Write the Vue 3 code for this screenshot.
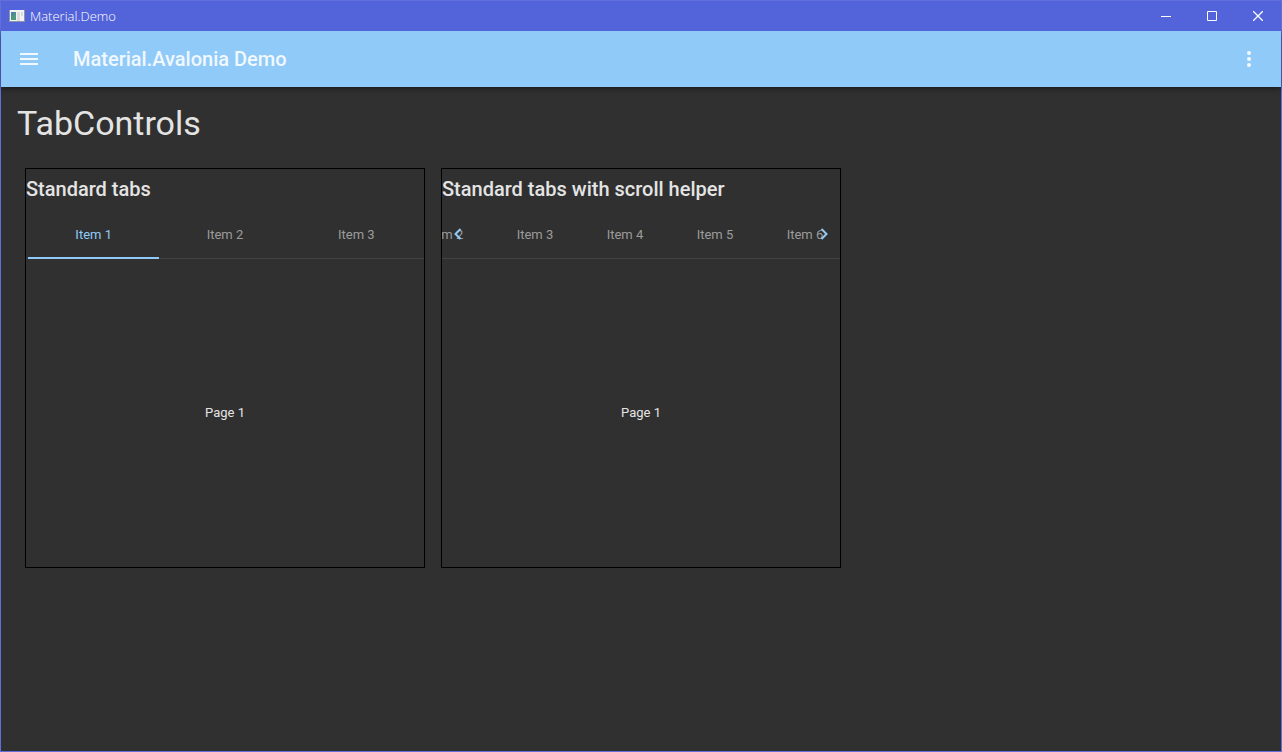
<script setup>
import { ref } from 'vue'

const standardTabs = ['Item 1', 'Item 2', 'Item 3']
const scrollTabs = ['Item 1', 'Item 2', 'Item 3', 'Item 4', 'Item 5', 'Item 6']
const selected = ref(0)
const scrollSelected = ref(0)
const offset = ref(134)

function scrollBy(delta) {
  offset.value = Math.max(0, Math.min(146, offset.value + delta))
}
</script>

<template>
  <div class="window">
    <header class="titlebar">
      <svg class="app-icon" width="16" height="14" viewBox="0 0 16 14" aria-hidden="true">
        <rect x="0" y="1" width="16" height="12" fill="#8f94a8" />
        <rect x="1" y="1" width="14" height="11" fill="#f3f3f3" />
        <rect x="2" y="3" width="5" height="8" fill="#4c9a7c" />
        <path d="M2 3h5L2 9z" fill="#4c86a5" />
        <rect x="8" y="3" width="3" height="9" fill="#dcdcdc" />
        <rect x="12" y="3" width="2" height="4" fill="#cfe2d8" />
      </svg>
      <span class="window-title">Material.Demo</span>
      <button class="caption" type="button" aria-label="Minimize">
        <svg width="10" height="10" viewBox="0 0 10 10"><path d="M0 5.5h10" /></svg>
      </button>
      <button class="caption" type="button" aria-label="Maximize">
        <svg width="10" height="10" viewBox="0 0 10 10"><path d="M.5.5h9v9h-9z" /></svg>
      </button>
      <button class="caption" type="button" aria-label="Close">
        <svg class="close" width="10" height="10" viewBox="0 0 10 10"><path d="M0 0l10 10M10 0L0 10" /></svg>
      </button>
    </header>

    <div class="appbar">
      <button class="icon-button" type="button" aria-label="Menu">
        <svg width="24" height="24" viewBox="0 0 24 24"><path d="M3 6h18v2H3zM3 11h18v2H3zM3 16h18v2H3z" /></svg>
      </button>
      <span class="app-title">Material.Avalonia Demo</span>
      <button class="icon-button" type="button" aria-label="More options">
        <svg width="24" height="24" viewBox="0 0 24 24">
          <circle cx="12" cy="6" r="2" /><circle cx="12" cy="12" r="2" /><circle cx="12" cy="18" r="2" />
        </svg>
      </button>
    </div>

    <main class="content">
      <h1>TabControls</h1>
      <div class="cards">
        <section class="card">
          <h2>Standard tabs</h2>
          <div class="strip">
            <div class="tabs even" role="tablist">
              <button
                v-for="(tab, i) in standardTabs"
                :key="tab"
                class="tab"
                :class="{ active: selected === i }"
                type="button"
                role="tab"
                :aria-selected="selected === i"
                @click="selected = i"
              >{{ tab }}</button>
            </div>
          </div>
          <div class="page" role="tabpanel">Page {{ selected + 1 }}</div>
        </section>

        <section class="card">
          <h2>Standard tabs with scroll helper</h2>
          <div class="strip">
            <div class="tabs" role="tablist" :style="{ marginLeft: -offset + 'px' }">
              <button
                v-for="(tab, i) in scrollTabs"
                :key="tab"
                class="tab"
                :class="{ active: scrollSelected === i }"
                type="button"
                role="tab"
                :aria-selected="scrollSelected === i"
                @click="scrollSelected = i"
              >{{ tab }}</button>
            </div>
            <button class="scroller left" type="button" aria-label="Scroll left" @click="scrollBy(-90)">
              <svg width="16" height="16" viewBox="0 0 16 16"><path d="M10.5 3L5.5 8l5 5" /></svg>
            </button>
            <button class="scroller right" type="button" aria-label="Scroll right" @click="scrollBy(90)">
              <svg width="16" height="16" viewBox="0 0 16 16"><path d="M5.5 3l5 5-5 5" /></svg>
            </button>
          </div>
          <div class="page" role="tabpanel">Page {{ scrollSelected + 1 }}</div>
        </section>
      </div>
    </main>
  </div>
</template>

<style>
body {
  background: #303030;
}
</style>

<style scoped>
.window {
  box-sizing: border-box;
  min-height: 100vh;
  display: flex;
  flex-direction: column;
  border: 1px solid #626fdb;
  background: #303030;
  color: #e4e4e4;
  font-family: Roboto, sans-serif;
  font-size: 13px;
}
button {
  padding: 0;
  border: 0;
  background: none;
  color: inherit;
  font: inherit;
  cursor: pointer;
}
svg {
  display: block;
}
.titlebar {
  position: relative;
  z-index: 1;
  display: flex;
  align-items: center;
  height: 30px;
  padding-left: 8px;
  background: #5363d9;
  color: #fff;
}
.app-icon {
  margin-right: 5px;
}
.window-title {
  flex: 1;
  font-family: "Open Sans", sans-serif;
  font-size: 13px;
  font-weight: 300;
  line-height: 16px;
}
.caption {
  display: flex;
  align-items: center;
  justify-content: center;
  width: 46px;
  height: 30px;
}
.caption svg {
  fill: none;
  stroke: #fff;
  stroke-width: 1;
}
.caption .close {
  stroke-width: 1.3;
}
.appbar {
  position: relative;
  display: flex;
  align-items: center;
  height: 56px;
  padding: 0 8px;
  background: #90caf9;
  color: #f1f8fe;
  box-shadow: 0 1px 6px rgba(0, 0, 0, 0.6);
}
.icon-button {
  display: flex;
  align-items: center;
  justify-content: center;
  width: 40px;
  height: 40px;
}
.icon-button svg {
  fill: currentColor;
}
.icon-button:last-child {
  margin-right: 4px;
}
.app-title {
  flex: 1;
  margin-left: 24px;
  font-size: 20px;
  font-weight: 500;
  line-height: 24px;
}
.content {
  padding: 16px;
}
h1 {
  margin: 0;
  font-size: 34px;
  font-weight: 400;
  line-height: 40px;
}
.cards {
  display: flex;
  flex-wrap: wrap;
  gap: 16px;
  padding: 25px 8px 8px;
}
.card {
  box-sizing: border-box;
  display: flex;
  flex-direction: column;
  width: 400px;
  min-height: 400px;
  border: 1px solid #000;
}
h2 {
  margin: 8px 0;
  font-size: 20px;
  font-weight: 500;
  line-height: 24px;
}
.strip {
  position: relative;
  overflow: hidden;
  padding: 0 2px;
  box-shadow: inset 0 -1px #424242;
}
.tabs {
  display: flex;
  height: 50px;
}
.tab {
  flex: none;
  width: 90px;
  padding-top: 2px;
  border-bottom: 2px solid transparent;
  color: #9c9c9c;
}
.even .tab {
  flex: 1;
}
.tab.active {
  border-bottom-color: #90caf9;
  color: #90caf9;
}
.scroller {
  position: absolute;
  top: 0;
  display: flex;
  align-items: center;
  justify-content: center;
  width: 32px;
  height: 50px;
}
.scroller svg {
  fill: none;
  stroke: #90caf9;
  stroke-width: 2;
}
.left {
  left: 0;
}
.right {
  right: 0;
}
.page {
  flex: 1;
  display: flex;
  align-items: center;
  justify-content: center;
  padding-bottom: 2px;
}
</style>
